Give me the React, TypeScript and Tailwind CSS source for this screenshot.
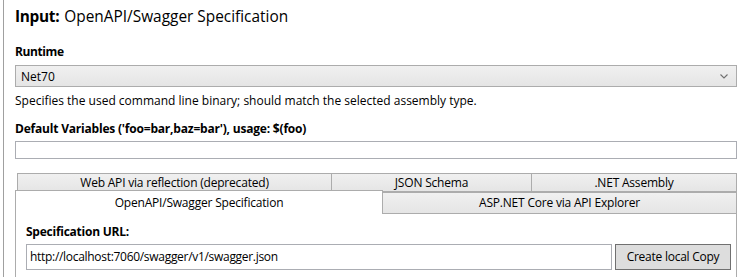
import React from "react";

const font = { fontFamily: '"Open Sans", "Noto Sans", sans-serif' };

function Tab({ label, className }: { label: string; className: string }) {
  return (
    <div
      className={
        "flex items-center justify-center border-[#acacac] bg-gradient-to-b from-[#f0f0f0] to-[#e5e5e5] text-[12px] tracking-[-0.2px] text-black " +
        className
      }
    >
      {label}
    </div>
  );
}

export default function App() {
  return (
    <div
      className="w-[740px] h-[277px] overflow-hidden bg-white pl-[3px]"
      style={font}
    >
      <div className="h-full border-l border-[#a0a0a0] pl-[11px] pr-[3px] flex flex-col">
        <div className="h-[34px] flex items-center text-[15.4px] text-black leading-none">
          <span className="font-bold tracking-[-0.3px]">Input:</span>
          <span className="ml-[5px]">OpenAPI/Swagger Specification</span>
        </div>
        <div className="mt-[10px] h-[16px] leading-[16px] text-[12px] font-bold tracking-[-0.4px] text-black">
          Runtime
        </div>
        <div className="mt-[5px] h-[22px] border border-[#acacac] bg-gradient-to-b from-[#f0f0f0] to-[#e5e5e5] flex items-center pl-[5px] pr-[8px] text-[12px] text-black">
          <span className="flex-1 mt-px">Net70</span>
          <svg width="8" height="5" viewBox="0 0 8 5" className="mt-[1px]">
            <path d="M0.5 0.5 L4 4 L7.5 0.5" fill="none" stroke="#707070" strokeWidth="1.1" />
          </svg>
        </div>
        <div className="mt-[6px] h-[16px] leading-[16px] text-[12px] text-black">
          Specifies the used command line binary; should match the selected assembly type.
        </div>
        <div className="mt-[12px] h-[16px] leading-[16px] text-[12px] font-bold tracking-[-0.2px] text-black">
          Default Variables ('foo=bar,baz=bar'), usage: $(foo)
        </div>
        <div className="mt-[4px] h-[18px] border border-[#abadb3] bg-white" />

        <div className="mt-[14px] flex flex-col flex-1">
          <div className="ml-[2px] flex h-[19px]">
            <Tab label="Web API via reflection (deprecated)" className="w-[315px] border" />
            <Tab label="JSON Schema" className="w-[200px] border border-l-0" />
            <Tab label=".NET Assembly" className="w-[205px] border border-l-0" />
          </div>
          <div className="flex items-end -mt-[2px]">
            <div className="w-[368px] h-[24px] border border-b-0 border-[#acacac] bg-white flex items-center justify-center text-[12px] tracking-[-0.2px] text-black relative z-10">
              OpenAPI/Swagger Specification
            </div>
            <Tab label="ASP.NET Core via API Explorer" className="flex-1 h-[22px] border border-l-0" />
          </div>
          <div className="flex-1 -mt-px border-l border-r border-[#acacac] pl-[10px] pr-[5px]">
            <div className="mt-[11px] h-[16px] leading-[16px] text-[12px] font-bold tracking-[-0.25px] text-black">
              Specification URL:
            </div>
            <div className="mt-[4px] flex">
              <div className="flex-1 h-[26px] border border-[#abadb3] bg-white flex items-center pl-[3px] text-[12px] tracking-[-0.3px] text-black">
                http://localhost:7060/swagger/v1/swagger.json
              </div>
              <div className="ml-[3px] w-[116px] h-[26px] border border-[#707070] bg-[#dddddd] flex items-center justify-center text-[12px] tracking-[-0.25px] text-black">
                Create local Copy
              </div>
            </div>
          </div>
        </div>
      </div>
    </div>
  );
}
